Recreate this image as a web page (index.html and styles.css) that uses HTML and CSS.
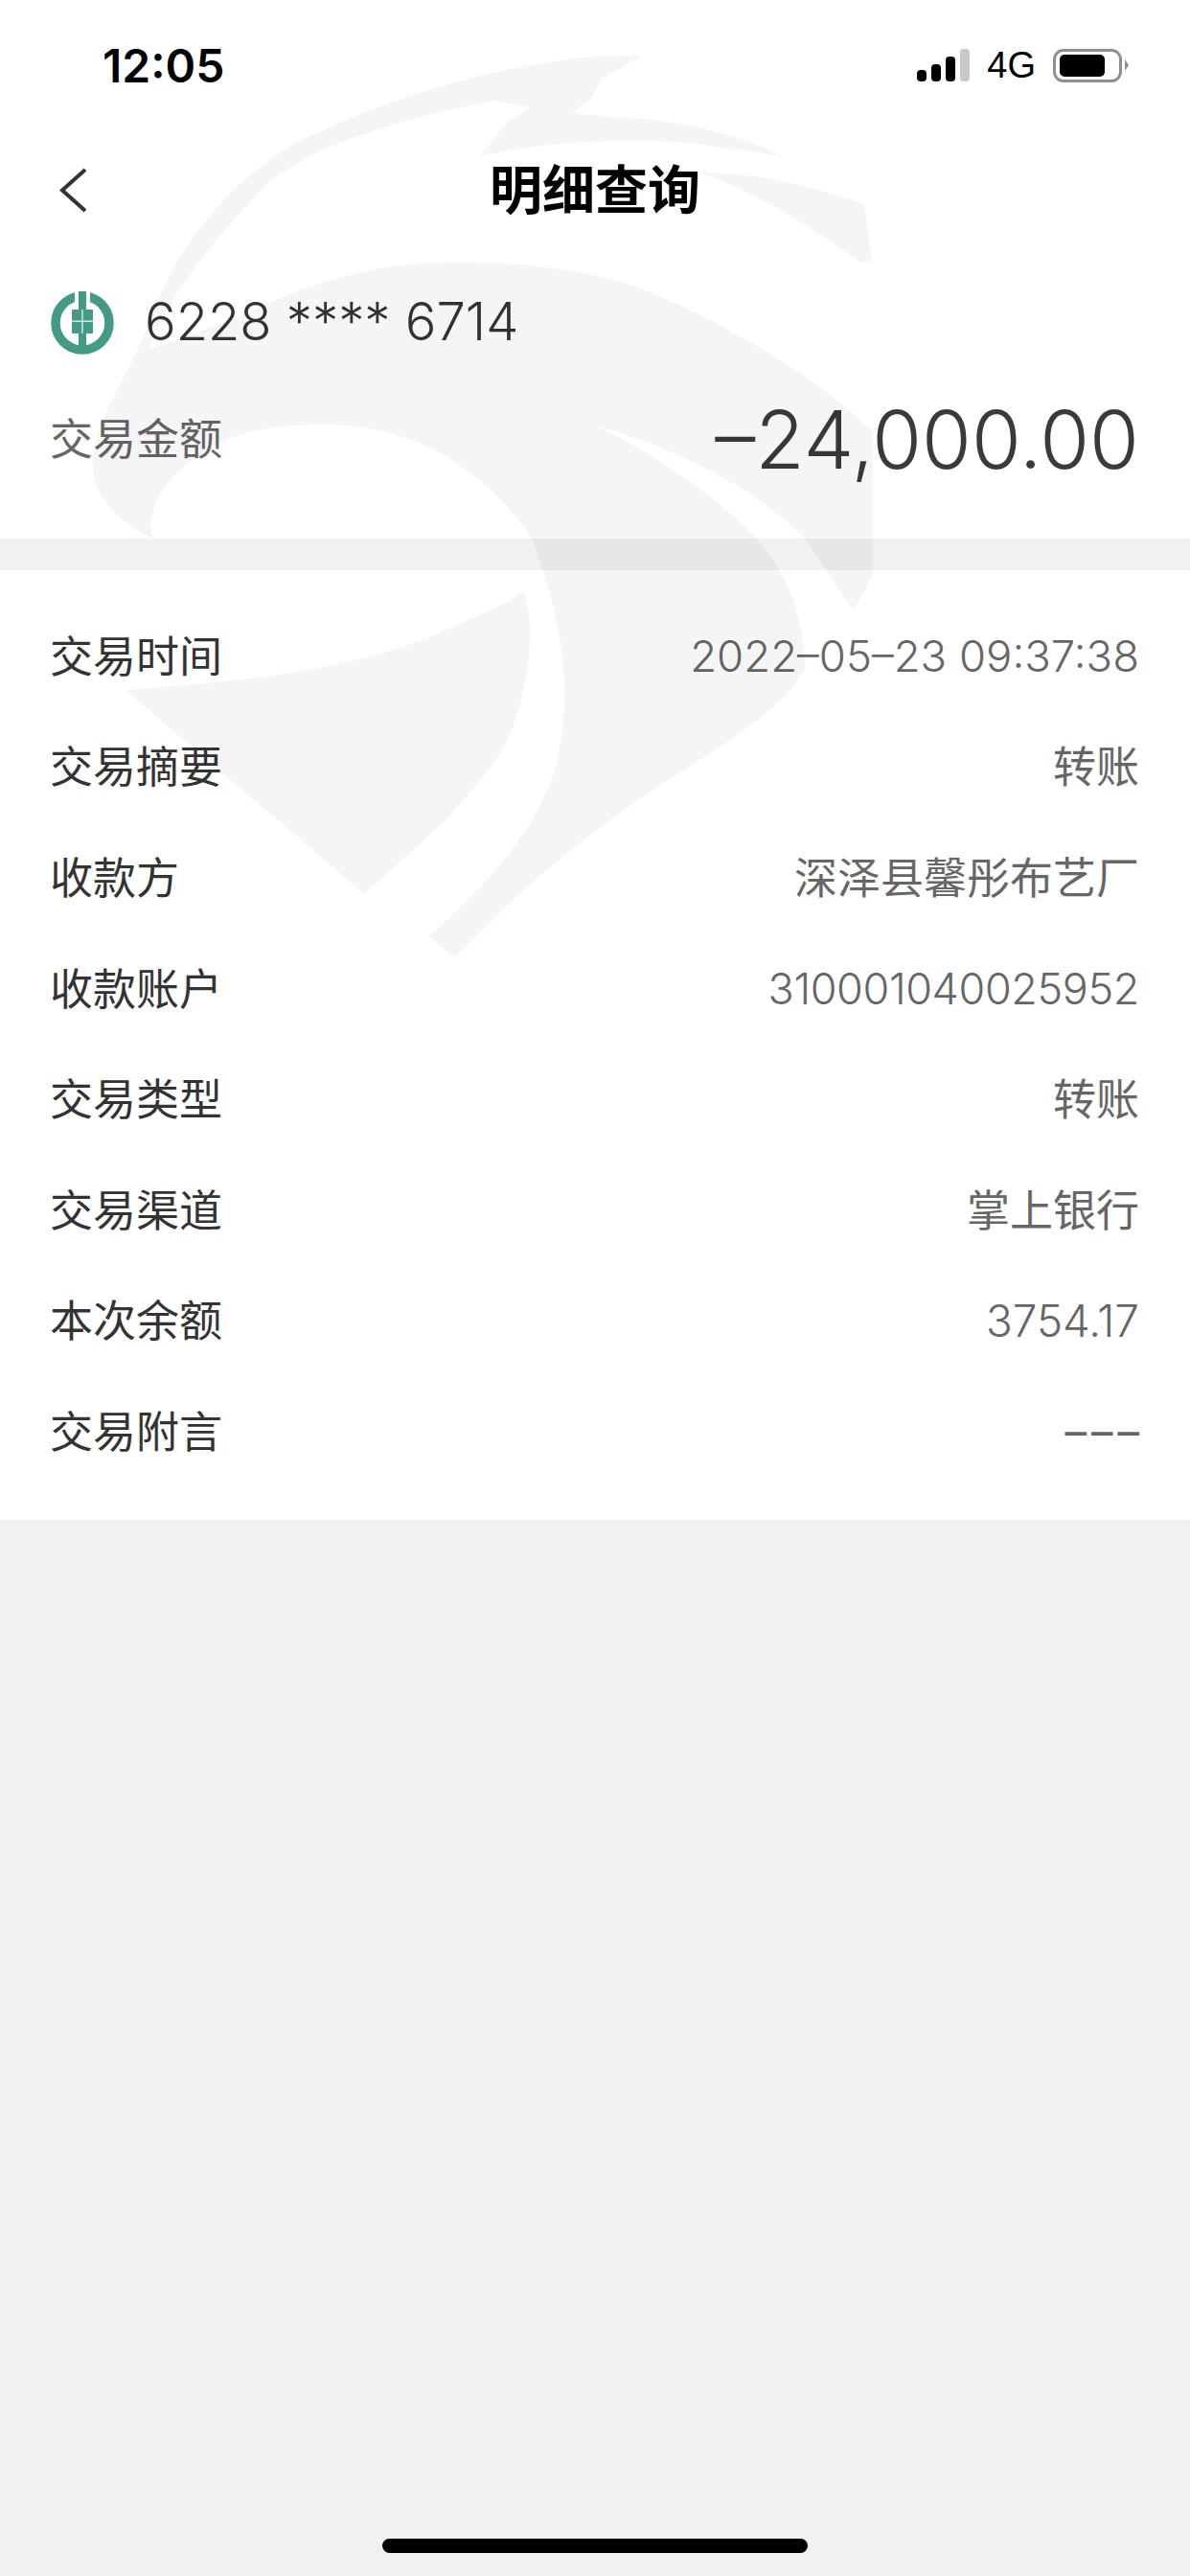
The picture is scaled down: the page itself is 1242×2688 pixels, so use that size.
FILE: index.html
```html
<!DOCTYPE html>
<html lang="zh-CN">
<head>
<meta charset="utf-8">
<title>明细查询</title>
<link rel="stylesheet" href="styles.css">
</head>
<body>
<div class="screen">
  <div class="status">
    <span class="time">12:05</span>
    <div class="status-right">
      <div class="signal"><i class="b1"></i><i class="b2"></i><i class="b3"></i><i class="b4"></i></div>
      <span class="net">4G</span>
      <div class="battery"><div class="battery-body"><div class="battery-fill"></div></div><div class="battery-nub"></div></div>
    </div>
  </div>
  <header class="nav">
    <svg class="back" width="40" height="60" viewBox="0 0 40 60"><path d="M33 10 L9 31.5 L33 53" fill="none" stroke="#333" stroke-width="4"/></svg>
    <h1 class="title">明细查询</h1>
    <span></span>
  </header>
  <section class="summary">
    <div class="account">
      <svg class="logo" width="66" height="66" viewBox="0 0 66 66">
        <circle cx="33" cy="33" r="28" fill="none" stroke="#419b87" stroke-width="9.5"/>
        <rect x="25" y="0" width="16" height="20" fill="#fff"/>
        <rect x="29" y="0" width="8" height="19" fill="#419b87"/>
        <rect x="22" y="19" width="22" height="25" rx="1" fill="#419b87"/>
        <rect x="29" y="44" width="8" height="20" fill="#419b87"/>
        <rect x="22" y="30.5" width="22" height="1.5" fill="#cfe6e0"/>
        <rect x="32.2" y="19" width="1.5" height="25" fill="#cfe6e0"/>
      </svg>
      <span class="card">6228 **** 6714</span>
    </div>
    <div class="amount-row">
      <span class="amount-label">交易金额</span>
      <span class="amount">–24,000.00</span>
    </div>
  </section>
  <div class="band"></div>
  <section class="details">
    <div class="row"><span class="k">交易时间</span><span class="v date">2022–05–23 09:37:38</span></div>
    <div class="row"><span class="k">交易摘要</span><span class="v cjk">转账</span></div>
    <div class="row"><span class="k">收款方</span><span class="v cjk">深泽县馨彤布艺厂</span></div>
    <div class="row"><span class="k">收款账户</span><span class="v acct">310001040025952</span></div>
    <div class="row"><span class="k">交易类型</span><span class="v cjk">转账</span></div>
    <div class="row"><span class="k">交易渠道</span><span class="v cjk">掌上银行</span></div>
    <div class="row"><span class="k">本次余额</span><span class="v bal">3754.17</span></div>
    <div class="row"><span class="k">交易附言</span><span class="v dashes">–––</span></div>
  </section>
  <div class="rest"><div class="home"></div></div>
  <svg class="watermark" width="1242" height="1100" viewBox="0 0 1242 1100">
    <path d="M670 58 C560 55 420 95 317 145 C240 185 180 260 150 350 C130 400 97 440 97 487 C97 520 130 550 160 562 C150 530 175 500 200 480 C240 450 280 443 340 443 C420 443 500 480 555 562 C585 640 600 720 580 800 C560 870 500 930 448 977 L475 1000 C540 930 600 880 680 825 C750 780 820 740 840 697 C840 660 830 620 810 590 C790 550 700 480 621 444 C700 465 790 510 840 562 C860 590 875 615 891 637 L911 600 L911 451 C850 390 760 340 680 305 C620 280 520 270 440 275 C360 280 290 310 240 335 C210 345 180 355 155 365 C180 300 225 250 280 190 C340 145 420 125 513 105 L553 112 L530 127 L500 163 C560 150 660 140 740 152 L817 163 C780 145 720 125 650 123 L597 118 L617 103 L627 83 Z"/>
    <path d="M131 720 C230 712 340 705 444 667 C480 650 520 635 547 617 C560 660 550 720 535 760 C510 820 440 880 380 933 Z"/>
    <path d="M730 180 C790 180 850 195 902 213 L910 273 L897 273 C850 240 800 205 730 180 Z"/>
  </svg>
</div>
</body>
</html>
```
FILE: styles.css
```css
* { box-sizing: border-box; }
html, body { margin: 0; padding: 0; }
body { background: #f1f1f1; font-family: Inter, "Noto Sans CJK SC", sans-serif; }
.screen { position: relative; height: 2688px; width: 1242px; display: flex; flex-direction: column; background: #fff; overflow: hidden; }

.status { height: 136px; flex: none; display: flex; align-items: center; justify-content: space-between; padding: 0 64px 0 107px; color: #000; }
.time { font-size: 48px; font-weight: 600; }
.status-right { display: flex; align-items: center; }
.signal { display: flex; align-items: flex-end; gap: 5px; height: 34px; margin-left: 1px; }
.signal i { display: block; width: 10px; background: #000; border-radius: 4px; }
.signal .b1 { height: 12px; }
.signal .b2 { height: 18px; }
.signal .b3 { height: 26px; }
.signal .b4 { height: 34px; background: #c8c8c8; }
.net { font-size: 38px; font-weight: 400; margin: 0 18px; color: #000; font-family: "Liberation Sans", sans-serif; }
.battery { display: flex; align-items: center; }
.battery-body { width: 72px; height: 35px; border: 3px solid #8f8f8f; border-radius: 11px; padding: 3px 4px; }
.battery-fill { width: 47px; height: 100%; background: #000; border-radius: 5px; }
.battery-nub { width: 0; height: 0; margin-left: 3px; border-left: 4px solid #8f8f8f; border-top: 6px solid transparent; border-bottom: 6px solid transparent; }

.nav { height: 122px; flex: none; display: grid; grid-template-columns: 1fr auto 1fr; align-items: center; }
.back { display: block; margin-left: 56px; }
.title { margin: 0; font-size: 55px; font-weight: 700; color: #000; line-height: 1; padding-top: 2px; }

.summary { height: 304px; flex: none; padding: 46px 53px 0 52px; }
.account { display: flex; align-items: center; gap: 32px; height: 66px; margin-left: 1px; }
.logo { display: block; flex: none; }
.card { font-size: 54.3px; font-weight: 350; color: #333; margin-bottom: 5px; }
.amount-row { display: flex; align-items: center; justify-content: space-between; height: 100px; margin-top: 38px; }
.amount-label { font-size: 45px; font-weight: 400; color: #666; margin-bottom: 6px; }
.amount { font-size: 84px; font-weight: 300; color: #3a3a3a; }

.band { height: 33px; flex: none; background: #f1f1f1; }

.details { flex: none; height: 991px; padding: 32px 53px 34px 52px; background: #fff; display: grid; grid-auto-rows: 115.6px; }
.row { display: flex; align-items: center; justify-content: space-between; font-size: 45px; font-weight: 350; }
.k { color: #333; font-weight: 400; margin-bottom: 5px; }
.v { color: #666; }
.cjk { font-weight: 400; margin-bottom: 5px; }
.date { font-size: 45.5px; }
.acct { letter-spacing: -0.4px; }
.bal { font-size: 45.8px; }
.dashes { letter-spacing: 5px; margin-right: -5px; font-weight: 400; }

.rest { flex: 1; background: #f1f1f1; display: flex; align-items: flex-end; justify-content: center; padding-bottom: 24px; }
.home { width: 444px; height: 15px; background: #000; border-radius: 8px; }

.watermark { position: absolute; left: 0; top: 0; pointer-events: none; }
.watermark path { fill: #000; fill-opacity: 0.04; }
```
